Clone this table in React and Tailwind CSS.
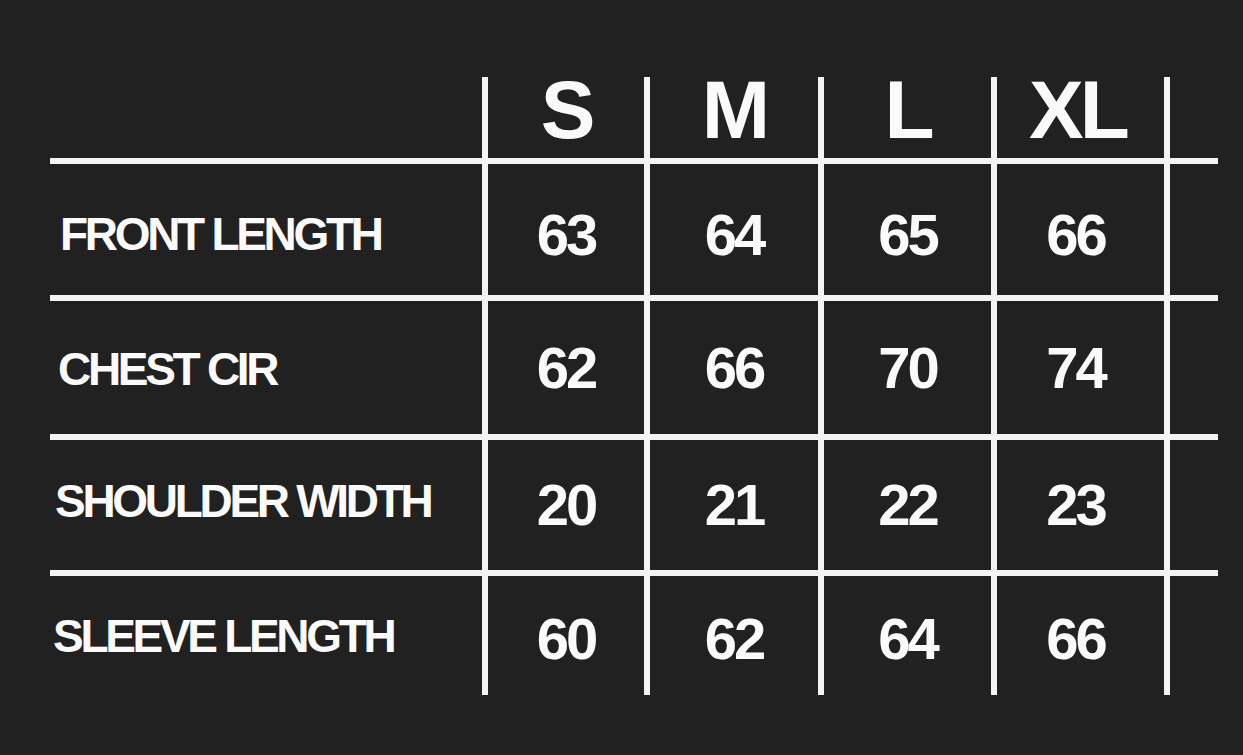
const sizes = ["S", "M", "L", "XL"];
const cellCols = ["col-start-3", "col-start-5", "col-start-7", "col-start-9"];
const rowStarts = ["row-start-3", "row-start-5", "row-start-7", "row-start-9"];

const rows = [
  { label: "FRONT LENGTH", values: [63, 64, 65, 66], pad: "pl-[10px] pt-[8px]" },
  { label: "CHEST CIR", values: [62, 66, 70, 74], pad: "pl-[8px] pt-[2px]" },
  { label: "SHOULDER WIDTH", values: [20, 21, 22, 23], pad: "pl-[5px] pb-[8px]" },
  { label: "SLEEVE LENGTH", values: [60, 62, 64, 66], pad: "pl-[3px]" },
];

// grid columns: label | line | S | line | M | line | L | line | XL | line | tail
// grid rows: header | line | row | line | row | line | row | line | row
const App = () => {
  return (
    <div
      className="w-[1243px] h-[755px] bg-[#212121] overflow-hidden"
      style={{ fontFamily: '"Liberation Sans", Arial, sans-serif' }}
    >
      <div className="ml-[50px] pt-[77px] grid grid-cols-[432px_6px_156px_6px_168px_6px_167px_6px_167px_6px_48px] grid-rows-[81px_6px_131px_6px_133px_6px_130px_6px_119px] text-[#fafafa] font-bold">
        {/* header */}
        <div className="col-start-1 row-start-1" />
        {sizes.map((s, i) => (
          <div
            key={s}
            className={`row-start-1 flex items-end justify-center pb-[7px] text-[82px] leading-none tracking-[-4px] ${cellCols[i]} ${
              i === 3 ? "pr-[6px]" : ""
            }`}
          >
            {s}
          </div>
        ))}

        {/* horizontal lines */}
        {["row-start-2", "row-start-4", "row-start-6", "row-start-8"].map((r) => (
          <div key={r} className={`${r} col-start-1 col-span-11 bg-[#f4f4f4]`} />
        ))}

        {/* vertical lines */}
        {["col-start-2", "col-start-4", "col-start-6", "col-start-8", "col-start-10"].map((c) => (
          <div key={c} className={`${c} row-start-1 row-span-9 bg-[#f4f4f4]`} />
        ))}

        {/* body rows */}
        {rows.map((row, ri) => [
          <div
            key={row.label}
            className={`${rowStarts[ri]} col-start-1 flex items-center text-[46px] leading-none tracking-[-3.3px] ${row.pad}`}
          >
            {row.label}
          </div>,
          ...row.values.map((v, vi) => (
            <div
              key={`${row.label}-${vi}`}
              className={`${rowStarts[ri]} ${cellCols[vi]} flex items-center justify-center text-[58px] leading-none tracking-[-3px] ${
                ri === 0 ? "pt-[10px]" : ri === 3 ? "pt-[6px]" : ""
              } ${vi === 3 ? "pr-[10px]" : ""}`}
            >
              {v}
            </div>
          )),
        ])}
      </div>
    </div>
  );
};

export default App;
